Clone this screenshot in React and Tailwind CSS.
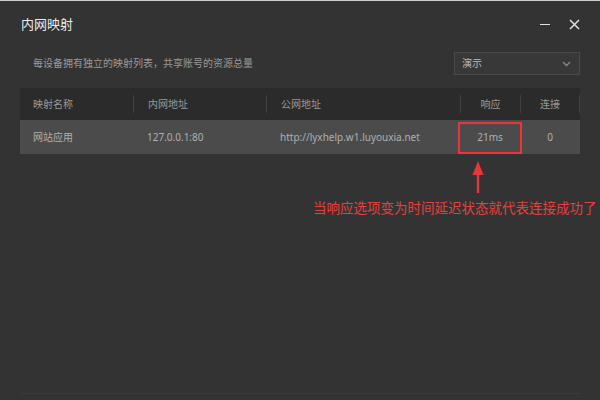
const FONT = { fontFamily: '"Noto Sans", "Noto Sans CJK SC", sans-serif' };

function Chevron() {
  return (
    <svg width="9" height="6" viewBox="0 0 9 6" fill="none">
      <path d="M1 1l3.5 3.5L8 1" stroke="#8a8a8a" strokeWidth="1.3" />
    </svg>
  );
}

export default function App() {
  return (
    <div className="relative w-[600px] h-[400px] overflow-hidden bg-[#333333]" style={FONT}>
      <div className="h-px bg-[#cfcfcf]" />

      {/* title bar */}
      <div className="flex items-center justify-between h-[47px] pl-[21px] pr-[20px]">
        <span className="text-[13px] text-[#ececec]">内网映射</span>
        <div className="flex items-center gap-[19px]">
          <div className="w-[10px] h-[1.5px] bg-[#e0e0e0]" />
          <svg width="11" height="11" viewBox="0 0 11 11">
            <path d="M1 1l9 9M10 1l-9 9" stroke="#e0e0e0" strokeWidth="1.5" />
          </svg>
        </div>
      </div>

      {/* toolbar */}
      <div className="flex items-center justify-between pl-[33px] pr-[20px] mt-[4px]">
        <span className="text-[10px] text-[#9a9a9a]">每设备拥有独立的映射列表，共享账号的资源总量</span>
        <div className="flex items-center justify-between w-[126px] h-[23px] pl-[7px] pr-[8px] border border-[#4a4a4a] bg-[#383838]">
          <span className="text-[10px] text-[#bdbdbd]">演示</span>
          <Chevron />
        </div>
      </div>

      {/* table */}
      <div className="mx-[20px] mt-[13px]">
        <div className="grid grid-cols-[113px_133px_194px_60px_60px] h-[32px] items-center bg-[#2b2b2b] text-[10px] text-[#9a9a9a]">
          <div className="pl-[13px]">映射名称</div>
          <div className="pl-[14px] border-l border-[#404040] h-[18px] flex items-center">内网地址</div>
          <div className="pl-[14px] border-l border-[#404040] h-[18px] flex items-center">公网地址</div>
          <div className="border-l border-[#404040] h-[18px] flex items-center justify-center">响应</div>
          <div className="border-l border-[#404040] border-r h-[18px] flex items-center justify-center">连接</div>
        </div>
        <div className="grid grid-cols-[113px_133px_194px_60px_60px] h-[34px] items-center bg-[#4b4b4b] text-[10px] text-[#b0b0b0]">
          <div className="pl-[13px]">网站应用</div>
          <div className="pl-[14px]">127.0.0.1:80</div>
          <div className="pl-[14px]">http://lyxhelp.w1.luyouxia.net</div>
          <div className="relative h-full flex items-center justify-center">
            21ms
            <div className="absolute left-[-2px] right-[-2px] top-[2px] bottom-0 border-2 border-[#e8363a]" />
          </div>
          <div className="text-center">0</div>
        </div>
      </div>

      {/* annotation */}
      <svg className="absolute left-[472px] top-[161px]" width="12" height="32" viewBox="0 0 12 32">
        <path d="M6 0L11.5 14H7.2V32H4.8V14H0.5Z" fill="#e8363a" />
      </svg>
      <div className="absolute left-[313px] top-[199px] whitespace-nowrap text-[13.5px] leading-[18px] text-[#e8403c]">
        当响应选项变为时间延迟状态就代表连接成功了
      </div>

      <div className="absolute left-[20px] right-[19px] top-[393px] h-px bg-[#3a3a3a]" />
    </div>
  );
}
